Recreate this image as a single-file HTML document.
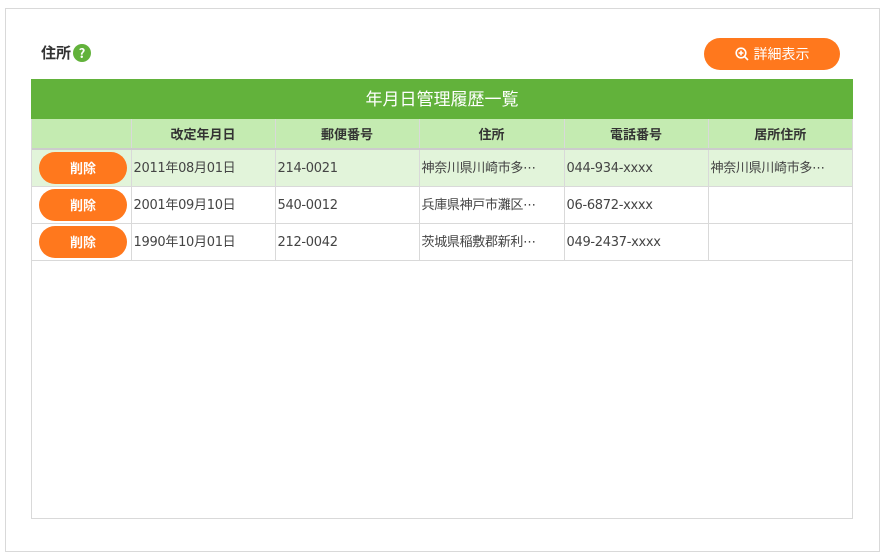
<!DOCTYPE html>
<html><head><meta charset="utf-8"><style>
*{box-sizing:border-box;margin:0;padding:0}
body{width:886px;height:559px;background:#fff;font-family:"Noto Sans CJK JP",sans-serif;position:relative;overflow:hidden}
.panel{position:absolute;left:5px;top:8px;width:875px;height:544px;border:1px solid #d9d9d9}
.title{position:absolute;left:41px;top:42px;font-size:15px;font-weight:bold;color:#333;display:flex;align-items:center}
.q{display:inline-block;width:18px;height:18px;border-radius:50%;background:#62b23b;color:#fff;font-size:13px;line-height:18px;text-align:center;margin-left:2px}
.btn{position:absolute;left:704px;top:38px;width:136px;height:32px;border-radius:16px;background:#ff781d;color:#fff;font-size:14px;display:flex;align-items:center;justify-content:center;gap:4px}
.box{position:absolute;left:31px;top:79px;width:822px;height:440px;border:1px solid #d9d9d9;border-top:none}
.hd{height:40px;background:#62b23b;color:#fff;font-size:17px;text-align:center;line-height:38px;margin:0 -1px}
table{border-collapse:collapse;width:820px;table-layout:fixed}
th{background:#c4ebb1;height:30px;font-size:13px;color:#333;border-left:1px solid #d9d9d9;border-bottom:2px solid #ccc}
td{height:37px;font-size:13px;color:#444;border-left:1px solid #d9d9d9;border-bottom:1px solid #d9d9d9;padding:2px 0 0 2px;white-space:nowrap;overflow:hidden;line-height:16px;font-family:"DejaVu Sans","Noto Sans CJK JP",sans-serif;letter-spacing:-0.3px}
th:first-child,td:first-child{border-left:none}
tr.a td{background:#e2f4da}
.del{display:block;width:88px;height:32px;border-radius:16px;background:#ff781d;color:#fff;font-weight:bold;text-align:center;line-height:32px;margin-left:7px;font-size:13px;font-family:"Noto Sans CJK JP",sans-serif;letter-spacing:0}
</style></head><body>
<div class="panel"></div>
<div class="title">住所<span class="q">?</span></div>
<div class="btn"><svg width="15" height="15" viewBox="0 0 15 15"><circle cx="6" cy="6" r="4.8" fill="none" stroke="#fff" stroke-width="1.6"/><path d="M6 3.6v4.8M3.6 6h4.8M9.5 9.5l3.5 3.5" stroke="#fff" stroke-width="1.6"/></svg>詳細表示</div>
<div class="box">
<div class="hd">年月日管理履歴一覧</div>
<table>
<colgroup><col style="width:99px"><col style="width:144px"><col style="width:144px"><col style="width:145px"><col style="width:144px"><col style="width:144px"></colgroup>
<tr><th></th><th>改定年月日</th><th>郵便番号</th><th>住所</th><th>電話番号</th><th>居所住所</th></tr>
<tr class="a"><td style="padding:0"><span class="del">削除</span></td><td>2011年08月01日</td><td>214-0021</td><td>神奈川県川崎市多⋯</td><td>044-934-xxxx</td><td>神奈川県川崎市多⋯</td></tr>
<tr><td style="padding:0"><span class="del">削除</span></td><td>2001年09月10日</td><td>540-0012</td><td>兵庫県神戸市灘区⋯</td><td>06-6872-xxxx</td><td></td></tr>
<tr><td style="padding:0"><span class="del">削除</span></td><td>1990年10月01日</td><td>212-0042</td><td>茨城県稲敷郡新利⋯</td><td>049-2437-xxxx</td><td></td></tr>
</table>
</div>
</body></html>
